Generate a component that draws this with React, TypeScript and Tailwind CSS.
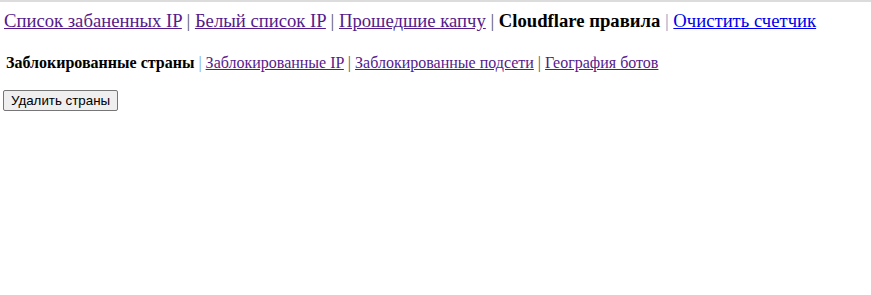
import React from "react";

const serif = { fontFamily: '"Liberation Serif", "Times New Roman", serif' };

export default function App() {
  const sep = (c: string) => <span className={c}> | </span>;
  return (
    <div className="min-h-[295px] bg-white border-t-2 border-[#dcdcdc]" style={serif}>
      <div className="pl-[4px] pt-[8px] text-[18.67px] leading-[22px] text-black">
        <a href="#" className="text-[#551a8b] underline">Список забаненных IP</a>
        {sep("text-[#555]")}
        <a href="#" className="text-[#551a8b] underline">Белый список IP</a>
        {sep("text-[#555]")}
        <a href="#" className="text-[#551a8b] underline">Прошедшие капчу</a>
        {sep("text-[#555]")}
        <b>Cloudflare правила</b>
        {sep("text-[#7aa6cc]")}
        <a href="#" className="text-[#0000ee] underline">Очистить счетчик</a>
      </div>
      <div className="pl-[6px] pt-[22px] text-[16px] leading-[18px] text-black">
        <b>Заблокированные страны</b>
        {sep("text-[#7aa6cc]")}
        <a href="#" className="text-[#551a8b] underline">Заблокированные IP</a>
        {sep("text-[#555]")}
        <a href="#" className="text-[#551a8b] underline">Заблокированные подсети</a>
        {sep("text-[#555]")}
        <a href="#" className="text-[#551a8b] underline">География ботов</a>
      </div>
      <div className="pl-[3px] pt-[16px]">
        <button
          className="h-[21px] px-[7px] text-[13.33px] leading-none text-black bg-[#efefef] border border-[#767676] rounded-[2px]"
          style={{ fontFamily: '"Liberation Sans", Arial, sans-serif' }}
        >
          Удалить страны
        </button>
      </div>
    </div>
  );
}
